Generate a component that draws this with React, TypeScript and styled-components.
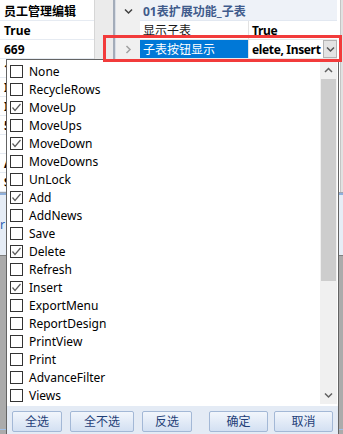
import React from "react";
import styled, { createGlobalStyle } from "styled-components";

const Global = createGlobalStyle`
  html, body { margin: 0; padding: 0; background: #fff; overflow: hidden; }
  body {
    font-family: "Noto Sans", "Noto Sans CJK SC", sans-serif;
    font-size: 12px;
    color: #000;
  }
  * { box-sizing: border-box; }
`;

const Screen = styled.div`
  position: relative;
  width: 343px;
  height: 434px;
  overflow: hidden;
  background: #ababab;
`;

const Backdrop = styled.div`
  display: flex;
  flex-direction: column;
  height: 100%;
`;

const GridArea = styled.div`
  display: flex;
  height: 192px;
  background: #fff;
`;

const LeftGrid = styled.div`
  width: 95px;
  padding-top: 2px;
  border-right: 1px solid #d6d6d6;
  display: flex;
  flex-direction: column;
  overflow: hidden;
`;

const LeftRow = styled.div`
  height: 19px;
  flex: none;
  display: flex;
  align-items: center;
  padding-left: 4px;
  border-bottom: 1px solid #e6ebf2;
  font-weight: 700;
  white-space: nowrap;
`;

const LeftScroll = styled.div`
  width: 18px;
  background: #ebebeb;
`;

const Splitter = styled.div`
  width: 3px;
  background: linear-gradient(to right, #a3acb9 0 2px, #d9dee6 2px);
`;

const RightGrid = styled.div`
  flex: 1;
  display: flex;
  background: #fff;
`;

const GutterCol = styled.div`
  width: 24px;
  background: #f0f0f0;
  padding-top: 2px;
  display: flex;
  flex-direction: column;
`;

const GutterSlot = styled.div`
  height: 19px;
  display: flex;
  align-items: center;
  justify-content: center;
  padding-left: 1px;
`;

const CellsCol = styled.div`
  flex: 1;
  padding-top: 2px;
  display: flex;
  flex-direction: column;
  background: linear-gradient(#eef2f8 0 2px, #fff 2px);
`;

const PRow = styled.div<{ $category?: boolean }>`
  display: flex;
  height: 19px;
  border-bottom: 1px solid ${(p) => (p.$category ? "#e2e8f1" : "#e8e8e8")};
  background: ${(p) => (p.$category ? "#eef2f8" : "#fff")};
`;

const CategoryText = styled.div`
  padding-left: 3px;
  display: flex;
  align-items: center;
  font-weight: 700;
  color: #3f5b8c;
  white-space: nowrap;
`;

const NameCell = styled.div<{ $selected?: boolean }>`
  width: 108px;
  flex: none;
  display: flex;
  align-items: center;
  padding-left: 3px;
  white-space: nowrap;
  overflow: hidden;
  background: ${(p) => (p.$selected ? "#0078d7" : "#fff")};
  color: ${(p) => (p.$selected ? "#fff" : "#1a1a1a")};
`;

const ValueCell = styled.div`
  width: 89px;
  flex: none;
  display: flex;
  align-items: center;
  border-left: 1px solid #e2e2e2;
  padding-left: 3px;
  font-weight: 700;
  overflow: hidden;
`;

const ValueText = styled.span`
  flex: 1;
  min-width: 0;
  white-space: nowrap;
  letter-spacing: -0.35px;
`;

const DropBtn = styled.span`
  width: 14px;
  height: 18px;
  flex: none;
  display: flex;
  align-items: center;
  justify-content: center;
  background: #e3e3e3;
  border: 1px solid #b3b3b3;
`;

const EdgeStrip = styled.div`
  width: 6px;
  flex: none;
  background: linear-gradient(to right, #fff 0 3px, #c4c4c4 3px 4px, #e1e1e1 4px);
`;

const RowsWrap = styled.div`
  flex: 1;
  display: flex;
  flex-direction: column;
`;

const InfoPanel = styled.div`
  height: 63px;
  background: #e6edf6;
  border-top: 1px solid #9ea6b1;
  box-shadow: inset 0 2px 0 #8fb0dc;
  display: flex;
  align-items: center;
  color: #2b5fb4;
`;

const GreyArea = styled.div`
  flex: 1;
  background: #ababab;
  border-top: 1px solid #7f7f7f;
  display: flex;
  flex-direction: column;
  justify-content: flex-end;
  padding-bottom: 4px;
`;

const StatusLine = styled.div`
  height: 1px;
  background: #9fc0e8;
`;

const Annotation = styled.div`
  position: absolute;
  left: 103px;
  top: 35px;
  width: 239px;
  height: 27px;
  border: 3px solid #f23b3b;
  z-index: 3;
  pointer-events: none;
`;

const Dropdown = styled.div`
  position: absolute;
  left: 6px;
  top: 59px;
  width: 333px;
  height: 380px;
  border: 1px solid #646464;
  background: #fff;
  display: flex;
  flex-direction: column;
  z-index: 2;
`;

const ListArea = styled.div`
  display: flex;
  padding: 2px 1px 2px 2px;
  background: #fff;
`;

const Items = styled.ul`
  list-style: none;
  margin: 0;
  padding: 0;
  flex: 1;
`;

const Item = styled.li`
  height: 18px;
  display: flex;
  align-items: center;
  gap: 6px;
  padding-left: 1px;
  white-space: nowrap;
`;

const Box = styled.span`
  width: 13px;
  height: 13px;
  flex: none;
  border: 1px solid #333;
  background: #fff;
  display: flex;
  align-items: center;
  justify-content: center;
`;

const ScrollBar = styled.div`
  width: 17px;
  flex: none;
  background: #f0f0f0;
  display: flex;
  flex-direction: column;
`;

const ScrollArrow = styled.div`
  height: 17px;
  display: flex;
  align-items: center;
  justify-content: center;
`;

const Track = styled.div`
  flex: 1;
  display: flex;
  flex-direction: column;
`;

const Thumb = styled.div`
  height: 202px;
  margin: 0 1px;
  background: #cdcdcd;
`;

const ButtonBar = styled.div`
  flex: 1;
  background: #e4ebf5;
  padding: 5px 5px 0 5px;
  display: flex;
  justify-content: space-between;
  align-items: flex-start;
`;

const BtnGroup = styled.div<{ $gap: number }>`
  display: flex;
  gap: ${(p) => p.$gap}px;
`;

const Btn = styled.button<{ $w: number }>`
  width: ${(p) => p.$w}px;
  height: 21px;
  padding: 0;
  border: 1px solid #a3b8d6;
  border-radius: 2px;
  background: linear-gradient(#f2f6fc, #d3e0f2);
  color: #1f3f78;
  font-family: "Noto Sans", "Noto Sans CJK SC", sans-serif;
  font-size: 12px;
  line-height: 19px;
`;

const Chevron = ({ dir, color }: { dir: "up" | "down" | "right"; color: string }) => {
  const pts =
    dir === "up" ? "1,5 4.5,1.5 8,5" : dir === "down" ? "1,1.5 4.5,5 8,1.5" : "1.5,1 5,4.5 1.5,8";
  const w = dir === "right" ? 7 : 9;
  const h = dir === "right" ? 9 : 7;
  return (
    <svg width={w} height={h} viewBox={`0 0 ${w} ${h}`}>
      <polyline points={pts} fill="none" stroke={color} strokeWidth="1.5" />
    </svg>
  );
};

const Check = () => (
  <svg width="11" height="11" viewBox="0 0 11 11">
    <polyline points="1.5,5.5 4,8.5 9.5,2" fill="none" stroke="#5c5c5c" strokeWidth="1.2" />
  </svg>
);

const leftRows = ["员工管理编辑", "True", "669", "1", "I", "I", "5", "", "A", "$"];

const options: [string, boolean][] = [
  ["None", false],
  ["RecycleRows", false],
  ["MoveUp", true],
  ["MoveUps", false],
  ["MoveDown", true],
  ["MoveDowns", false],
  ["UnLock", false],
  ["Add", true],
  ["AddNews", false],
  ["Save", false],
  ["Delete", true],
  ["Refresh", false],
  ["Insert", true],
  ["ExportMenu", false],
  ["ReportDesign", false],
  ["PrintView", false],
  ["Print", false],
  ["AdvanceFilter", false],
  ["Views", false],
];

export default function App() {
  return (
    <>
      <Global />
      <Screen>
        <Backdrop>
          <GridArea>
            <LeftGrid>
              {leftRows.map((t, i) => (
                <LeftRow key={i}>{t}</LeftRow>
              ))}
            </LeftGrid>
            <LeftScroll />
            <Splitter />
            <RightGrid>
              <GutterCol>
                <GutterSlot>
                  <Chevron dir="down" color="#404040" />
                </GutterSlot>
                <GutterSlot />
                <GutterSlot>
                  <Chevron dir="right" color="#a0a0a0" />
                </GutterSlot>
              </GutterCol>
              <CellsCol>
                <RowsWrap>
                  <PRow $category>
                    <CategoryText>01表扩展功能_子表</CategoryText>
                  </PRow>
                  <PRow>
                    <NameCell>显示子表</NameCell>
                    <ValueCell>
                      <ValueText>True</ValueText>
                    </ValueCell>
                  </PRow>
                  <PRow>
                    <NameCell $selected>子表按钮显示</NameCell>
                    <ValueCell>
                      <ValueText>elete, Insert</ValueText>
                      <DropBtn>
                        <Chevron dir="down" color="#555" />
                      </DropBtn>
                    </ValueCell>
                  </PRow>
                </RowsWrap>
              </CellsCol>
              <EdgeStrip />
            </RightGrid>
          </GridArea>
          <InfoPanel>r</InfoPanel>
          <GreyArea>
            <StatusLine />
          </GreyArea>
        </Backdrop>

        <Dropdown>
          <ListArea>
            <Items>
              {options.map(([label, checked]) => (
                <Item key={label}>
                  <Box>{checked && <Check />}</Box>
                  {label}
                </Item>
              ))}
            </Items>
            <ScrollBar>
              <ScrollArrow>
                <Chevron dir="up" color="#606060" />
              </ScrollArrow>
              <Track>
                <Thumb />
              </Track>
              <ScrollArrow>
                <Chevron dir="down" color="#606060" />
              </ScrollArrow>
            </ScrollBar>
          </ListArea>
          <ButtonBar>
            <BtnGroup $gap={8}>
              <Btn $w={50}>全选</Btn>
              <Btn $w={64}>全不选</Btn>
              <Btn $w={50}>反选</Btn>
            </BtnGroup>
            <BtnGroup $gap={6}>
              <Btn $w={59}>确定</Btn>
              <Btn $w={59}>取消</Btn>
            </BtnGroup>
          </ButtonBar>
        </Dropdown>

        <Annotation />
      </Screen>
    </>
  );
}
